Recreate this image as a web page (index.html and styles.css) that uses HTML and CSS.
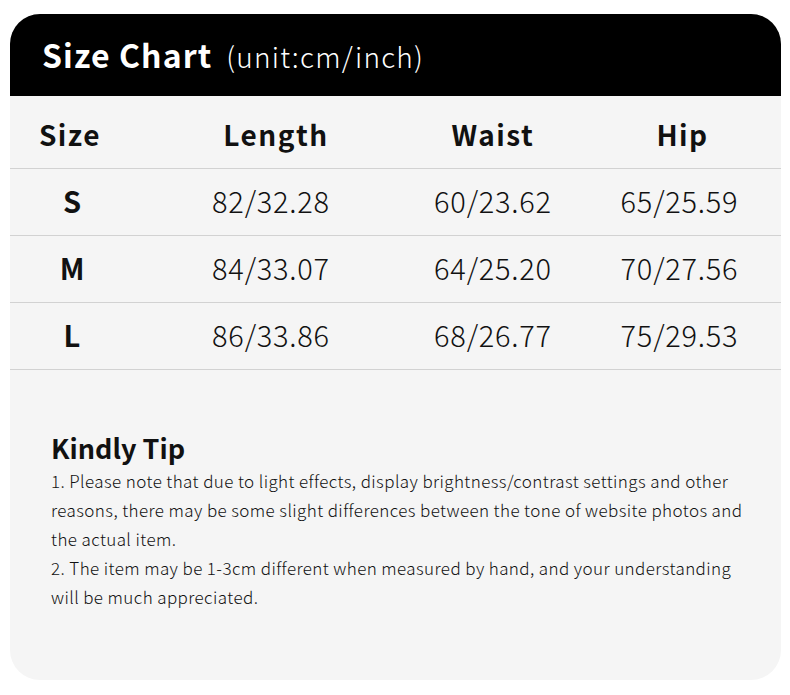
FILE: index.html
```html
<!DOCTYPE html>
<html>
<head>
<meta charset="utf-8">
<link rel="stylesheet" href="styles.css">
</head>
<body>
<div class="card">
  <div class="head">
    <span class="title">Size Chart</span>
    <span class="unit">(unit:cm/inch)</span>
  </div>
  <div class="table">
    <div class="row hrow">
      <div class="cell c1">Size</div>
      <div class="cell c2">Length</div>
      <div class="cell c3">Waist</div>
      <div class="cell c4">Hip</div>
    </div>
    <div class="row">
      <div class="cell c1 sz">S</div>
      <div class="cell c2">82/32.28</div>
      <div class="cell c3">60/23.62</div>
      <div class="cell c4">65/25.59</div>
    </div>
    <div class="row">
      <div class="cell c1 sz">M</div>
      <div class="cell c2">84/33.07</div>
      <div class="cell c3">64/25.20</div>
      <div class="cell c4">70/27.56</div>
    </div>
    <div class="row">
      <div class="cell c1 sz">L</div>
      <div class="cell c2">86/33.86</div>
      <div class="cell c3">68/26.77</div>
      <div class="cell c4">75/29.53</div>
    </div>
  </div>
  <div class="tip">
    <h2 class="tip-title">Kindly Tip</h2>
    <p class="tip-text">1. Please note that due to light effects, display brightness/contrast settings and other reasons, there may be some slight differences between the tone of website photos and the actual item.<br>2. The item may be 1-3cm different when measured by hand, and your understanding will be much appreciated.</p>
  </div>
</div>
</body>
</html>
```

FILE: styles.css
```css
html, body {
  margin: 0;
  padding: 0;
  background: #ffffff;
}
body {
  padding: 14px 9px 0 10px;
  font-family: "Noto Sans CJK SC", "Noto Sans", sans-serif;
  color: #111;
}
.card {
  width: 771px;
  height: 666px;
  background: #f5f5f5;
  border-radius: 30px;
  overflow: hidden;
  display: flex;
  flex-direction: column;
}
.head {
  height: 82px;
  background: #000;
  color: #fff;
  display: flex;
  align-items: baseline;
  padding: 0 0 0 32px;
  box-sizing: border-box;
  padding-top: 17px;
}
.title {
  font-size: 32px;
  font-weight: 700;
  letter-spacing: 1.1px;
}
.unit {
  font-size: 28px;
  font-weight: 300;
  letter-spacing: 1.2px;
  margin-left: 14px;
}
.table {
  display: flex;
  flex-direction: column;
}
.row {
  box-sizing: border-box;
  display: grid;
  grid-template-columns: 124px 286px 146px 1fr;
  height: 67px;
  align-items: center;
  border-bottom: 1px solid #d2d2d2;
  font-size: 29px;
  font-weight: 300;
  letter-spacing: 0.75px;
  padding-bottom: 4px;
}
.hrow {
  height: 73px;
  font-weight: 700;
  font-size: 28px;
  letter-spacing: 1.5px;
  padding-top: 3px;
  padding-bottom: 0;
}
.cell {
  text-align: center;
}
.c2 {
  padding-right: 12px;
}
.hrow .c1 {
  padding-right: 4px;
}
.hrow .c2 {
  padding-right: 2px;
}
.c4 {
  padding-left: 12px;
}
.hrow .c4 {
  padding-left: 18px;
}
.sz {
  font-weight: 700;
  letter-spacing: 0;
}
.tip {
  padding: 60px 0 0 41px;
}
.tip-title {
  margin: 0;
  font-size: 27px;
  font-weight: 700;
  line-height: 36px;
}
.tip-text {
  margin: 0;
  font-size: 17px;
  line-height: 29px;
  font-weight: 300;
  letter-spacing: 0.4px;
  width: 700px;
}
```
